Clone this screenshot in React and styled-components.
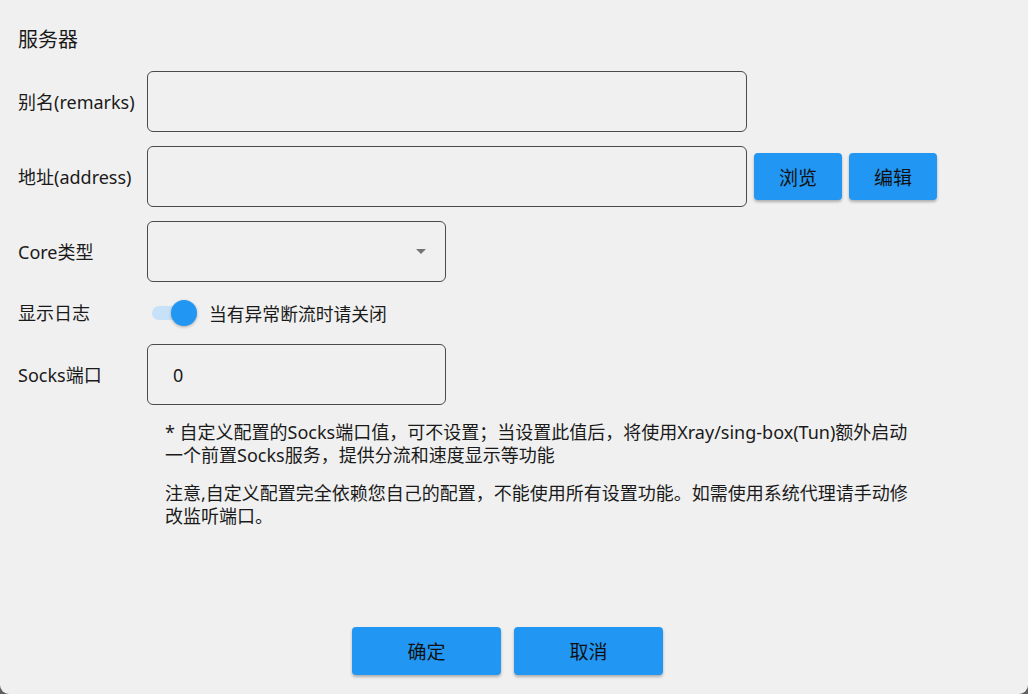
import React, { useState } from "react";
import styled, { createGlobalStyle } from "styled-components";

const GlobalStyle = createGlobalStyle`
  html, body {
    margin: 0;
    padding: 0;
    background: #5f5f5f;
  }
  body {
    font-family: "Noto Sans", "Noto Sans CJK SC", sans-serif;
    color: #1a1a1a;
  }
  * { box-sizing: border-box; }
`;

const Window = styled.div`
  width: 1028px;
  height: 694px;
  background: #f0f0f0;
  border-radius: 0 0 9px 9px;
  padding: 0 18px 19px 18px;
  display: flex;
  flex-direction: column;
  overflow: hidden;
`;

const Title = styled.h1`
  margin: 26px 0 0 0;
  font-size: 20px;
  line-height: 28px;
  font-weight: 400;
`;

const Form = styled.div`
  margin-top: 17px;
  display: grid;
  grid-template-columns: 129px 1fr;
  row-gap: 14px;
  align-items: center;
`;

const Label = styled.div`
  font-size: 18px;
  line-height: 24px;
`;

const FieldRow = styled.div`
  display: flex;
  align-items: center;
  gap: 7px;
  min-height: ${(p) => p.$h || 61}px;
`;

const Box = styled.div`
  position: relative;
  width: ${(p) => p.$w}px;
  height: 61px;
  border: 1.6px solid #4a4a4a;
  border-radius: 6px;
  background: transparent;
  display: flex;
  align-items: center;
  padding-left: 25px;
  font-size: 18px;
`;

const Arrow = styled.span`
  position: absolute;
  right: 19px;
  top: 27px;
  width: 0;
  height: 0;
  border-left: 5.5px solid transparent;
  border-right: 5.5px solid transparent;
  border-top: 5.5px solid #747474;
`;

const Button = styled.button`
  width: ${(p) => p.$w}px;
  height: ${(p) => p.$h}px;
  border: none;
  border-radius: 4px;
  background: #2196f3;
  color: #111;
  font-family: inherit;
  font-size: 19px;
  box-shadow: 0 2px 3px rgba(0, 0, 0, 0.28);
  cursor: pointer;
  padding: 0;
`;

const SwitchWrap = styled.div`
  display: flex;
  align-items: center;
  gap: 13px;
  padding-left: 5px;
  font-size: 17.8px;
`;

const Track = styled.div`
  position: relative;
  width: 44px;
  height: 14px;
  border-radius: 7px;
  background: #c7e2f8;
`;

const Thumb = styled.div`
  position: absolute;
  top: -6px;
  left: ${(p) => (p.$on ? 19 : -2)}px;
  width: 26px;
  height: 26px;
  border-radius: 50%;
  background: #2196f3;
  box-shadow: 0 1px 3px rgba(0, 0, 0, 0.3);
`;

const Notes = styled.div`
  grid-column: 2;
  padding-left: 18px;
  margin-top: 2px;
  width: 800px;
  font-size: 18px;
  line-height: 22.5px;
`;

const Para = styled.p`
  margin: 0 0 16px 0;
  width: 756px;
`;

const Footer = styled.div`
  margin-top: auto;
  display: flex;
  justify-content: center;
  gap: 13px;
  padding-right: 13px;
`;

export default function App() {
  const [log, setLog] = useState(true);
  return (
    <>
      <GlobalStyle />
      <Window>
        <Title>服务器</Title>
        <Form>
          <Label>别名(remarks)</Label>
          <FieldRow>
            <Box $w={600} />
          </FieldRow>

          <Label>地址(address)</Label>
          <FieldRow>
            <Box $w={600} />
            <Button $w={88} $h={47}>浏览</Button>
            <Button $w={88} $h={47}>编辑</Button>
          </FieldRow>

          <Label>Core类型</Label>
          <FieldRow>
            <Box $w={299}>
              <Arrow />
            </Box>
          </FieldRow>

          <Label>显示日志</Label>
          <FieldRow $h={34}>
            <SwitchWrap onClick={() => setLog(!log)}>
              <Track>
                <Thumb $on={log} />
              </Track>
              <span>当有异常断流时请关闭</span>
            </SwitchWrap>
          </FieldRow>

          <Label>Socks端口</Label>
          <FieldRow>
            <Box $w={299}>0</Box>
          </FieldRow>

          <Notes>
            <Para>
              * 自定义配置的Socks端口值，可不设置；当设置此值后，将使用Xray/sing-box(Tun)额外启动一个前置Socks服务，提供分流和速度显示等功能
            </Para>
            <Para>
              注意,自定义配置完全依赖您自己的配置，不能使用所有设置功能。如需使用系统代理请手动修改监听端口。
            </Para>
          </Notes>
        </Form>
        <Footer>
          <Button $w={149} $h={48}>确定</Button>
          <Button $w={149} $h={48}>取消</Button>
        </Footer>
      </Window>
    </>
  );
}
